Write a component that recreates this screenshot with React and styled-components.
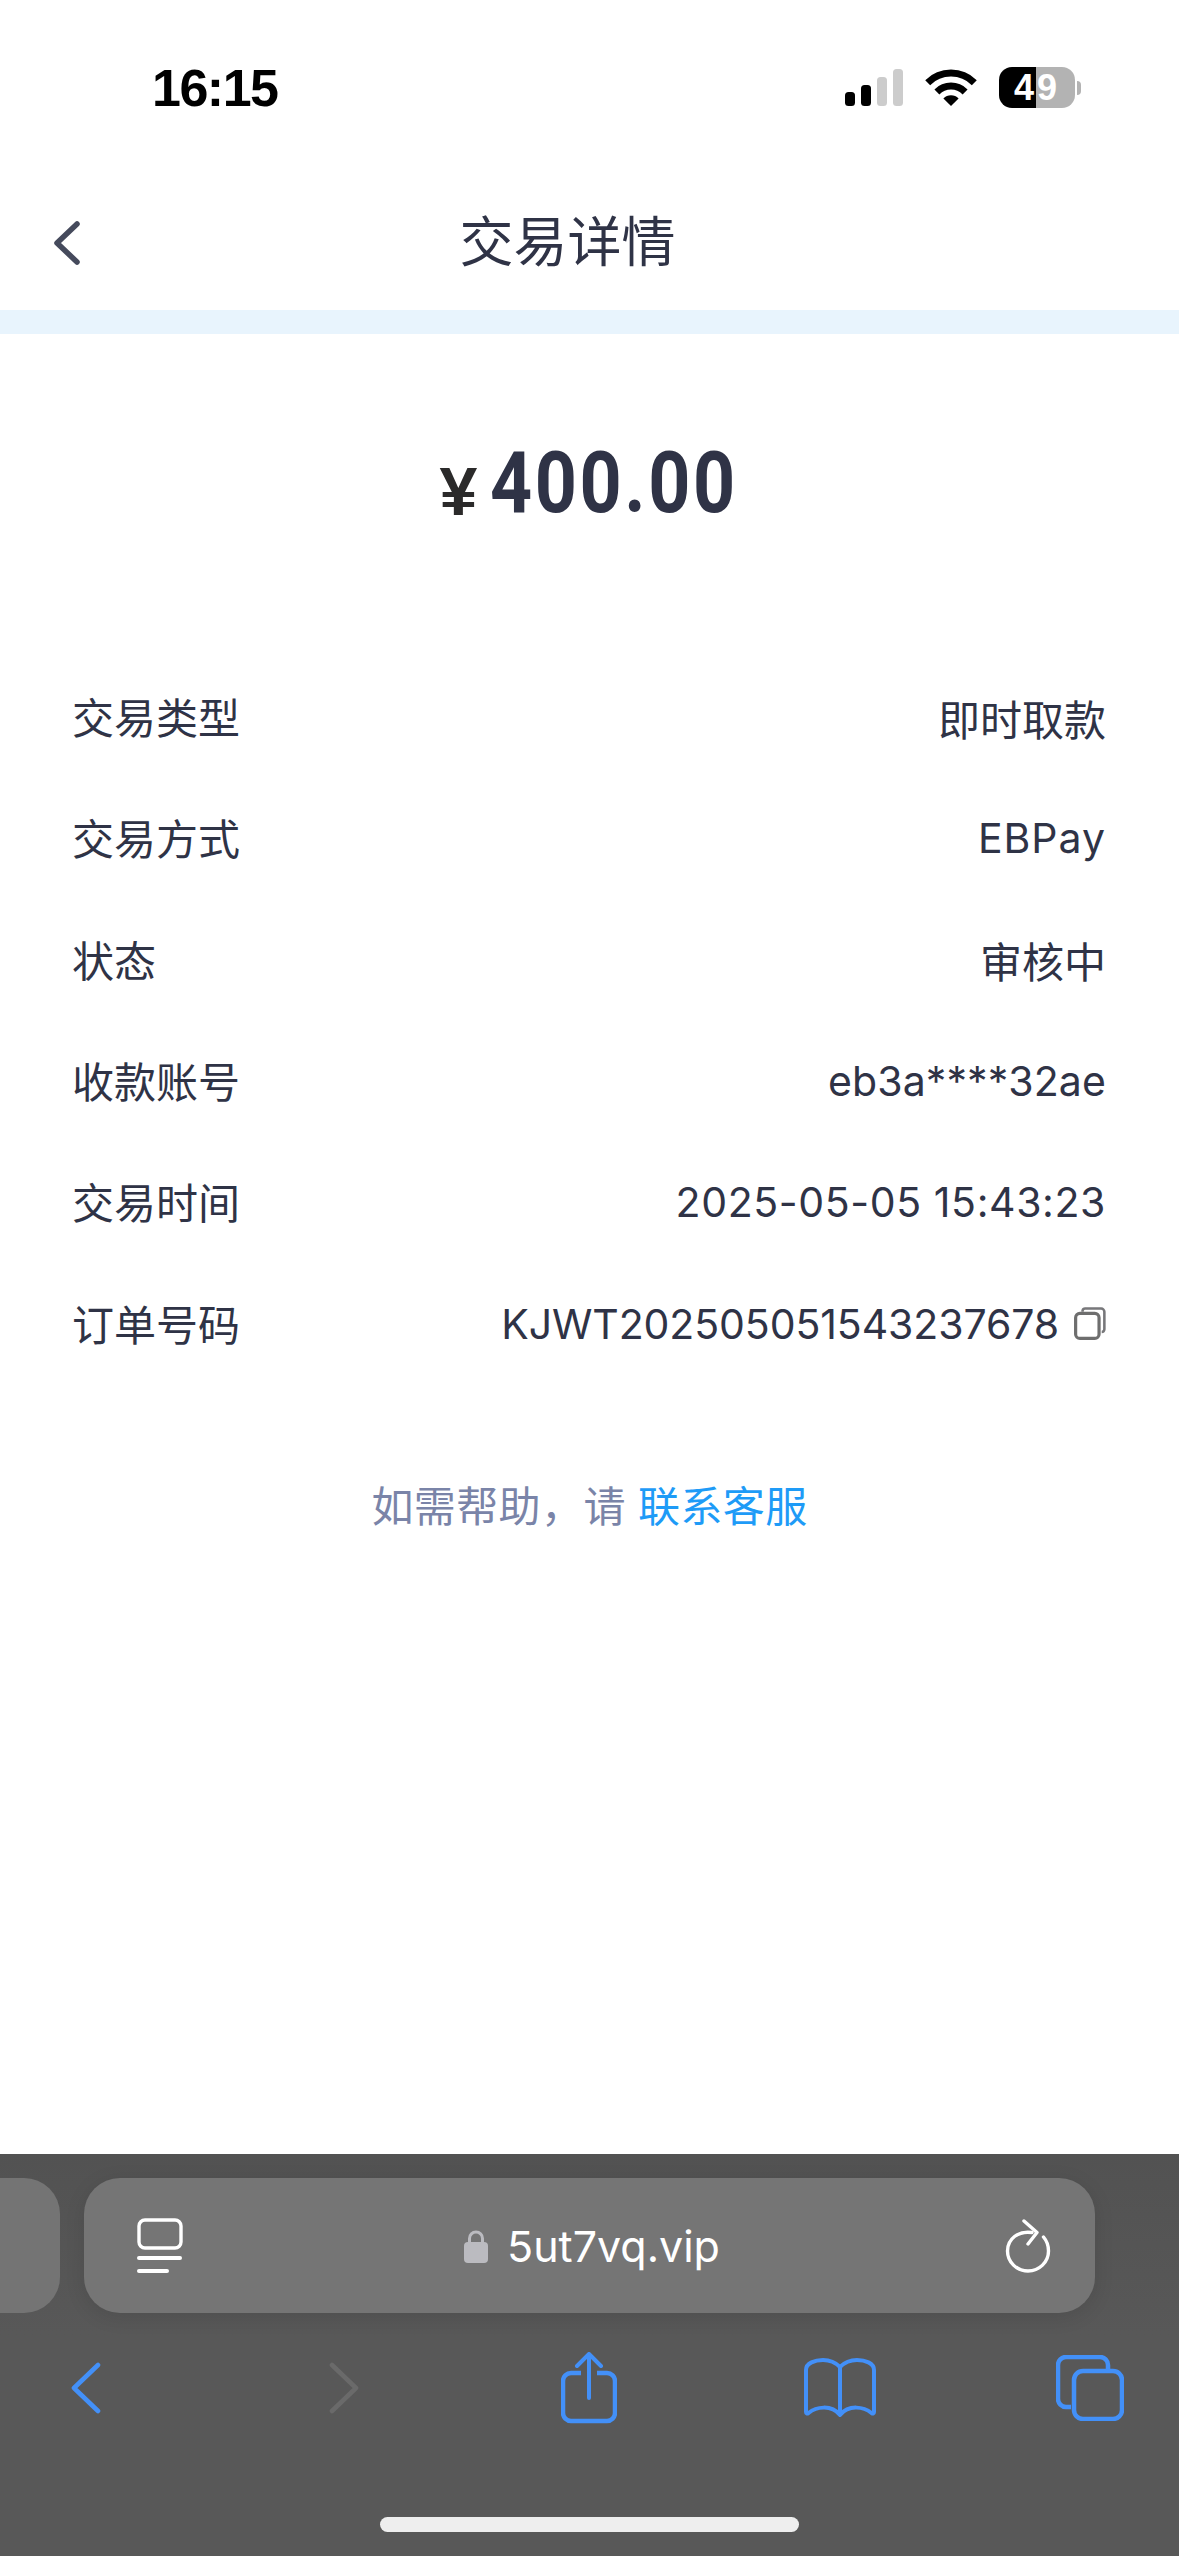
import React from 'react';
import styled, { createGlobalStyle } from 'styled-components';

const GlobalStyle = createGlobalStyle`
  html, body {
    margin: 0;
    padding: 0;
    background: #fff;
  }
`;

const Page = styled.div`
  display: flex;
  flex-direction: column;
  width: 1179px;
  height: 2556px;
  overflow: hidden;
  background: #fff;
  font-family: Inter, 'Noto Sans CJK SC', sans-serif;
  color: #2f3346;
`;

const StatusBar = styled.div`
  display: flex;
  justify-content: space-between;
  align-items: flex-start;
  height: 176px;
  padding: 60px 98px 0 152px;
  box-sizing: border-box;
`;

const Clock = styled.div`
  font-family: 'Liberation Sans', sans-serif;
  font-size: 52px;
  line-height: 56px;
  font-weight: 700;
  letter-spacing: -1.5px;
  color: #000;
`;

const StatusIcons = styled.div`
  display: flex;
  align-items: center;
  gap: 22px;
  margin-top: 7px;
`;

const BatteryWrap = styled.div`
  display: flex;
  align-items: center;
  gap: 2px;
`;

const BatteryBody = styled.div`
  display: flex;
  justify-content: center;
  align-items: center;
  width: 76px;
  height: 41px;
  border-radius: 13px;
  background: linear-gradient(90deg, #000 ${p => p.$level}%, #b3b3b3 ${p => p.$level}%);
  color: #fff;
  font-family: 'Liberation Sans', sans-serif;
  font-size: 36px;
  font-weight: 700;
  letter-spacing: 3px;
`;

const BatteryNub = styled.div`
  width: 4px;
  height: 14px;
  border-radius: 0 4px 4px 0;
  background: #b3b3b3;
`;

const NavBar = styled.div`
  position: relative;
  display: flex;
  justify-content: center;
  align-items: center;
  height: 134px;
`;

const BackButton = styled.div`
  position: absolute;
  left: 52px;
  top: 44px;
  display: flex;
`;

const Title = styled.div`
  font-size: 54px;
  line-height: 66px;
  font-weight: 400;
  color: #2f3346;
  margin: 0 0 0 -44px;
`;

const Band = styled.div`
  height: 24px;
  background: #e8f4fd;
`;

const AmountBlock = styled.div`
  display: flex;
  justify-content: center;
  align-items: flex-start;
  gap: 13px;
  height: 321px;
  padding-top: 110px;
  box-sizing: border-box;
  margin-left: -7px;
`;

const Yen = styled.span`
  font-family: 'Liberation Sans', sans-serif;
  font-size: 68px;
  line-height: 78px;
  font-weight: 700;
  color: #2b2a2a;
  margin-top: 8px;
`;

const AmountValue = styled.span`
  display: inline-block;
  font-family: Roboto, sans-serif;
  font-size: 85px;
  line-height: 78px;
  font-weight: 700;
  letter-spacing: 3px;
  color: #2f3346;
  transform: scaleX(0.865);
  transform-origin: left center;
  width: 242px;
  white-space: nowrap;
`;

const Rows = styled.div`
  display: flex;
  flex-direction: column;
  padding: 0 73px 0 72px;
`;

const Row = styled.div`
  display: flex;
  justify-content: space-between;
  align-items: center;
  height: 121.3px;
  font-size: 42px;
`;

const Label = styled.span`
  color: #2f3346;
`;

const Value = styled.span`
  display: flex;
  align-items: center;
  gap: 15px;
  padding-top: 3px;
  font-family: Inter, 'Noto Sans CJK SC', sans-serif;
  font-size: ${p => p.$size || 41}px;
  color: #2f3346;
  letter-spacing: ${p => p.$tracking || 0}px;
`;

const Help = styled.div`
  margin-top: 93px;
  text-align: center;
  font-size: 42px;
  line-height: 62px;
  letter-spacing: 0.4px;
  color: #7a84a8;
`;

const HelpLink = styled.span`
  color: #1e9bf7;
`;

const BrowserChrome = styled.div`
  display: flex;
  flex-direction: column;
  margin-top: auto;
  height: 402px;
  background: linear-gradient(#525252, #585858 45%);
`;

const TabsRow = styled.div`
  display: flex;
  gap: 24px;
  padding-top: 24px;
  margin-left: -60px;
`;

const TabStub = styled.div`
  width: 120px;
  height: 135px;
  border-radius: 36px;
  background: #747474;
`;

const AddressField = styled.div`
  display: flex;
  align-items: center;
  justify-content: space-between;
  width: 1011px;
  height: 135px;
  padding: 0 44px 0 53px;
  box-sizing: border-box;
  border-radius: 36px;
  background: #757575;
  box-shadow: 0 4px 20px rgba(0, 0, 0, 0.1);
`;

const UrlGroup = styled.div`
  display: flex;
  align-items: center;
  gap: 19px;
  color: #fff;
  font-family: Inter, 'Liberation Sans', sans-serif;
  font-size: 43px;
  margin-left: -4px;
`;

const ToolBar = styled.div`
  display: flex;
  align-items: center;
  height: 110px;
  padding-left: 71px;
  margin-top: 20px;
`;

const ToolItem = styled.div`
  display: flex;
  margin-left: ${p => p.$gap || 0}px;
`;

const HomeIndicator = styled.div`
  align-self: center;
  width: 419px;
  height: 15px;
  margin-top: 74px;
  border-radius: 8px;
  background: #eeeeee;
`;

const SignalIcon = () => (
  <svg width="58" height="37" viewBox="0 0 58 37">
    <rect x="0" y="23" width="10" height="14" rx="3.5" fill="#000" />
    <rect x="16" y="16" width="10" height="21" rx="3.5" fill="#000" />
    <rect x="32" y="8" width="10" height="29" rx="3.5" fill="#cccccc" />
    <rect x="48" y="0" width="10" height="37" rx="3.5" fill="#cccccc" />
  </svg>
);

const WifiIcon = () => (
  <svg width="52" height="38" viewBox="0 0 52 38">
    <path d="M2.7 13.7A33 33 0 0 1 49.3 13.7" fill="none" stroke="#000" strokeWidth="7" />
    <path d="M11.9 22.9A20 20 0 0 1 40.1 22.9" fill="none" stroke="#000" strokeWidth="7" />
    <path d="M26 37L18.4 29.4A10.7 10.7 0 0 1 33.6 29.4Z" fill="#000" />
  </svg>
);

const BackChevron = () => (
  <svg width="30" height="46" viewBox="0 0 30 46">
    <path d="M25 4L5 23L25 42" fill="none" stroke="#454a5c" strokeWidth="5.5" strokeLinecap="round" strokeLinejoin="round" />
  </svg>
);

const CopyIcon = () => (
  <svg width="32" height="33" viewBox="0 0 30 31">
    <path d="M8 4.5V3.5A2.5 2.5 0 0 1 10.5 1.5H25.5A3 3 0 0 1 28.5 4.5V21A2.5 2.5 0 0 1 26 23.5" fill="none" stroke="#77777a" strokeWidth="2.4" />
    <rect x="1.5" y="6" width="22" height="23.5" rx="4" fill="none" stroke="#6e6e6e" strokeWidth="3" />
  </svg>
);

const TabOverviewIcon = () => (
  <svg width="46" height="56" viewBox="0 0 46 56">
    <rect x="2" y="2" width="42" height="28" rx="6" fill="none" stroke="#fff" strokeWidth="3.4" />
    <rect x="0" y="38" width="45" height="4" rx="2" fill="#fff" />
    <rect x="0" y="51" width="32" height="4" rx="2" fill="#fff" />
  </svg>
);

const LockIcon = () => (
  <svg width="24" height="34" viewBox="0 0 24 34">
    <path d="M5.5 15V9.5a6.5 6.5 0 0 1 13 0V15" fill="none" stroke="#bbbbc0" strokeWidth="3" />
    <rect x="0" y="13" width="24" height="21" rx="4" fill="#bbbbc0" />
  </svg>
);

const ReloadIcon = () => (
  <svg width="46" height="54" viewBox="0 0 46 54">
    <path d="M27 13.5C13 11.5 2.5 20 2.5 32a20.5 20 0 0 0 41 0c0-6-2-10.500-5-14" fill="none" stroke="#fff" strokeWidth="3.4" strokeLinecap="round" />
    <path d="M19 2L32 13.500L23 25" fill="none" stroke="#fff" strokeWidth="3.400" strokeLinecap="round" strokeLinejoin="round" />
  </svg>
);

const NavChevron = ({ flip, color }) => (
  <svg width="30" height="52" viewBox="0 0 30 52">
    <path
      d={flip ? 'M3 3L27 26L3 49' : 'M27 3L3 26L27 49'}
      fill="none"
      stroke={color}
      strokeWidth="4.600"
      strokeLinecap="round"
      strokeLinejoin="round"
    />
  </svg>
);

const ShareIcon = () => (
  <svg width="56" height="72" viewBox="0 0 56 72">
    <path d="M20 21H10a8 8 0 0 0-8 8V61a8 8 0 0 0 8 8H46a8 8 0 0 0 8-8V29a8 8 0 0 0-8-8H36" fill="none" stroke="#4390f8" strokeWidth="4.500" />
    <path d="M28 3V46" fill="none" stroke="#4390f8" strokeWidth="4" strokeLinecap="round" />
    <path d="M16 14L28 2L40 14" fill="none" stroke="#4390f8" strokeWidth="4" strokeLinecap="round" strokeLinejoin="round" />
  </svg>
);

const BookIcon = () => (
  <svg width="72" height="60" viewBox="0 0 72 60">
    <path
      d="M36 9C31 4 25 2 19 2C11 2 2 5 2 12V54C2 55.500 3 56 4.500 55C12 49 27 46 36 57C45 46 60 49 67.500 55C69 56 70 55.500 70 54V12C70 5 61 2 53 2C47 2 41 4 36 9V57"
      fill="none"
      stroke="#4390f8"
      strokeWidth="4"
      strokeLinejoin="round"
    />
  </svg>
);

const TabsIcon = () => (
  <svg width="68" height="66" viewBox="0 0 68 66">
    <path d="M15 52H10a8 8 0 0 1-8-8V10a8 8 0 0 1 8-8H44a8 8 0 0 1 8 8V15" fill="none" stroke="#4390f8" strokeWidth="4.500" />
    <rect x="18" y="16" width="48" height="48" rx="9" fill="none" stroke="#4390f8" strokeWidth="4.500" />
  </svg>
);

const details = [
  { label: '交易类型', value: '即时取款', size: 42 },
  { label: '交易方式', value: 'EBPay', tracking: 1 },
  { label: '状态', value: '审核中', size: 42 },
  { label: '收款账号', value: 'eb3a****32ae', tracking: 0.1 },
  { label: '交易时间', value: '2025-05-05 15:43:23', tracking: 0.6 },
  { label: '订单号码', value: 'KJWT202505051543237678', tracking: -0.1, copy: true },
];

const App = () => (
  <Page>
    <GlobalStyle />
    <StatusBar>
      <Clock>16:15</Clock>
      <StatusIcons>
        <SignalIcon />
        <WifiIcon />
        <BatteryWrap>
          <BatteryBody $level={49}>49</BatteryBody>
          <BatteryNub />
        </BatteryWrap>
      </StatusIcons>
    </StatusBar>
    <NavBar>
      <BackButton>
        <BackChevron />
      </BackButton>
      <Title>交易详情</Title>
    </NavBar>
    <Band />
    <AmountBlock>
      <Yen>¥</Yen>
      <AmountValue>400.00</AmountValue>
    </AmountBlock>
    <Rows>
      {details.map(row => (
        <Row key={row.label}>
          <Label>{row.label}</Label>
          <Value $size={row.size} $tracking={row.tracking}>
            {row.value}
            {row.copy && <CopyIcon />}
          </Value>
        </Row>
      ))}
    </Rows>
    <Help>
      如需帮助，请 <HelpLink>联系客服</HelpLink>
    </Help>
    <BrowserChrome>
      <TabsRow>
        <TabStub />
        <AddressField>
          <TabOverviewIcon />
          <UrlGroup>
            <LockIcon />
            5ut7vq.vip
          </UrlGroup>
          <ReloadIcon />
        </AddressField>
      </TabsRow>
      <ToolBar>
        <ToolItem>
          <NavChevron color="#4390f8" />
        </ToolItem>
        <ToolItem $gap={228}>
          <NavChevron flip color="#6a6a6a" />
        </ToolItem>
        <ToolItem $gap={202}>
          <ShareIcon />
        </ToolItem>
        <ToolItem $gap={187}>
          <BookIcon />
        </ToolItem>
        <ToolItem $gap={180}>
          <TabsIcon />
        </ToolItem>
      </ToolBar>
      <HomeIndicator />
    </BrowserChrome>
  </Page>
);

export default App;
